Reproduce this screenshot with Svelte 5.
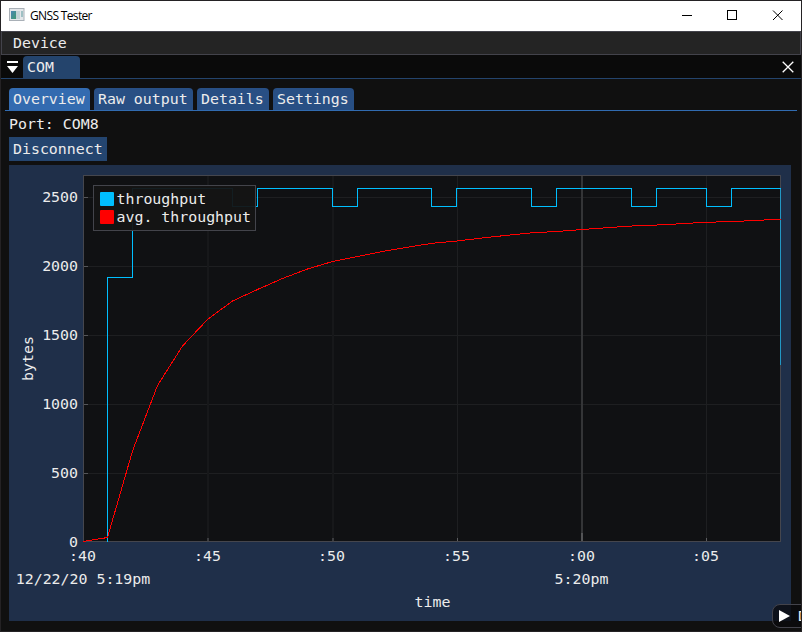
<script>
  const tabs = [
    { name: 'Overview', width: 81 },
    { name: 'Raw output', width: 99 },
    { name: 'Details', width: 72 },
    { name: 'Settings', width: 81 }
  ];
  let active = $state('Overview');

  const yTicks = [
    [2500, 197], [2000, 266], [1500, 335], [1000, 404], [500, 473], [0, 542]
  ];
  const xTicks = [
    [':40', 83], [':45', 208], [':50', 332], [':55', 457], [':00', 582], [':05', 706]
  ];

  const throughput =
    'M107.5 542V277.5H132.5V188.5H232.5V206.5H257.5V188.5H332.5V206.5H357.5V188.5H431.5V206.5H456.5V188.5H531.5V206.5H556.5V188.5H631.5V206.5H656.5V188.5H706.5V206.5H731.5V188.5H781';
  const average =
    '83.5,541.5 107.5,537.5 132.5,451 157.5,385.5 182.5,346 207.5,319.5 232.5,301 257.5,289.5 282.5,278.5 307.5,269 332.5,261.5 357.5,256.5 382.5,251.5 407.5,247.2 432,243.3 457,241 482,238 507,235.3 532,232.8 557,231.5 582,229.5 607,227.7 632,226 657,225 682,223.7 707,222.2 732,221.7 757,220.3 781,219.3';
</script>

<div class="window">
  <header class="titlebar">
    <svg class="appicon" width="16" height="14" viewBox="0 0 16 14">
      <defs>
        <linearGradient id="screen" x1="0" y1="0" x2="1" y2="1">
          <stop offset="0" stop-color="#4a86b4" />
          <stop offset="1" stop-color="#3f9a72" />
        </linearGradient>
      </defs>
      <rect x=".5" y=".5" width="14.5" height="12" fill="#e4e7ea" stroke="#a9b0b7" />
      <rect x="2" y="3" width="5" height="8" fill="url(#screen)" />
      <rect x="7" y="3" width="4" height="8" fill="#c3d3d6" />
      <rect x="12" y="3" width="2" height="6" fill="#9fc0c4" />
    </svg>
    <span class="title">GNSS Tester</span>
    <svg class="controls" width="120" height="30" viewBox="0 0 120 30" fill="none" stroke="#000">
      <path d="M5 14.5H15" />
      <rect x="50.5" y="9.5" width="9" height="9" />
      <path d="M96 9.5L105.5 19M105.5 9.5L96 19" />
    </svg>
  </header>

  <nav class="menubar"><span>Device</span></nav>

  <div class="dock">
    <svg class="drop" width="12" height="12" viewBox="0 0 12 12" fill="#fff">
      <rect x="0" y="0" width="11" height="2" />
      <path d="M0 5H11L5.5 12Z" />
    </svg>
    <span class="docktab">COM</span>
    <svg class="close" width="12" height="12" viewBox="0 0 12 12" stroke="#fff" stroke-width="1.3">
      <path d="M.7 .7L11.3 11.3M11.3 .7L.7 11.3" />
    </svg>
  </div>

  <main>
    <div class="tabs">
      {#each tabs as { name, width }}
        <button class="tab" class:active={active === name} style:width="{width}px" onclick={() => (active = name)}>{name}</button>
      {/each}
    </div>
    <div class="port">Port: COM8</div>
    <button class="disconnect">Disconnect</button>

    <svg class="chart" width="782" height="456" viewBox="9 165 782 456">
      <rect x="83" y="175" width="698" height="367" fill="#101113" />
      <g shape-rendering="crispEdges">
        {#each yTicks.slice(0, 5) as [, y]}
          <path d="M84 {y + 0.5}H780" stroke="#1e1f21" />
          <path d="M84 {y + 0.5}h4" stroke="#55565a" />
        {/each}
        {#each xTicks.slice(1) as [label, x]}
          {#if label === ':00'}
            <path d="M{x} 176V541" stroke="#343537" stroke-width="2" />
            <path d="M{x} 533V542" stroke="#535456" stroke-width="2" />
          {:else if label === ':45' || label === ':50'}
            <path d="M{x + (label === ':50' ? 1 : 0)} 176V541" stroke="#17181a" stroke-width="2" />
            <path d="M{x + (label === ':50' ? 1 : 0)} 538V542" stroke="#3b3c3f" stroke-width="2" />
          {:else}
            <path d="M{x + 0.5} 176V541" stroke="#1e1f21" />
            <path d="M{x + 0.5} 538V542" stroke="#5c5d60" />
          {/if}
        {/each}
        <rect x="83.5" y="175.5" width="697" height="366" fill="none" stroke="#45464d" />
        <path d={throughput} fill="none" stroke="#00bfff" />
        <path d="M780.5 189V365" stroke="#2297c4" />
        <polyline points={average} fill="none" stroke="#f00" />
        <rect x="93.5" y="185.5" width="162" height="45" fill="#141414" fill-opacity=".94" stroke="#43444b" />
      </g>
      <rect x="100" y="192" width="14" height="14" rx="1" fill="#00bfff" />
      <rect x="100" y="210" width="14" height="14" rx="1" fill="#f00" />
      <g class="labels">
        <text x="116.5" y="204">throughput</text>
        <text x="116.5" y="222">avg. throughput</text>
        {#each yTicks as [value, y]}
          <text x="78" y={y + 5} text-anchor="end">{value}</text>
        {/each}
        {#each xTicks as [label, x]}
          <text x={x - 0.5} y="561" text-anchor="middle">{label}</text>
        {/each}
        <text x="83" y="584" text-anchor="middle">12/22/20 5:19pm</text>
        <text x="581.5" y="584" text-anchor="middle">5:20pm</text>
        <text x="432.5" y="607" text-anchor="middle">time</text>
        <text transform="translate(33 358.5) rotate(-90)" text-anchor="middle">bytes</text>
      </g>
    </svg>
  </main>

  <div class="debug">
    <svg width="11" height="12" viewBox="0 0 11 12" fill="#fff"><path d="M0 0L11 6L0 12Z" /></svg>
    <span>D</span>
  </div>
</div>

<style>
  :global(body) {
    margin: 0;
    background: #101010;
  }
  .window {
    position: relative;
    box-sizing: border-box;
    width: 802px;
    height: 632px;
    overflow: hidden;
    display: flex;
    flex-direction: column;
    background: #101010;
    border: 1px solid #242224;
    color: #ececec;
    font: 14.9px/18px 'DejaVu Sans Mono', monospace;
    white-space: pre;
  }
  svg {
    display: block;
    flex: none;
  }
  .titlebar {
    display: flex;
    align-items: center;
    height: 30px;
    background: #fff;
    color: #000;
    font: 12px/16px 'Open Sans', 'Noto Sans', sans-serif;
    letter-spacing: -0.65px;
  }
  .appicon {
    margin-left: 8px;
    margin-bottom: 2px;
  }
  .title {
    margin-left: 5px;
  }
  .controls {
    margin-left: auto;
    margin-right: 4px;
  }
  .menubar {
    box-sizing: border-box;
    height: 24px;
    padding: 2px 11px;
    background: #242424;
    border: 1px solid #43434b;
  }
  .dock {
    box-sizing: border-box;
    display: flex;
    align-items: center;
    height: 24px;
    background: #0a0a0a;
    border-bottom: 1px solid #24446c;
    padding: 0 7px 0 6px;
  }
  .docktab {
    align-self: flex-end;
    box-sizing: border-box;
    width: 57px;
    height: 22px;
    margin-left: 4px;
    padding: 2px 4px;
    border-radius: 4px 4px 0 0;
    background: #24446c;
  }
  .close {
    margin-left: auto;
  }
  main {
    display: flex;
    flex-direction: column;
    align-items: flex-start;
    padding: 9px 4px 0;
  }
  button {
    border: 0;
    margin: 0;
    color: inherit;
    font: inherit;
  }
  .tabs {
    align-self: stretch;
    display: flex;
    gap: 4px;
    padding: 0 4px;
    border-bottom: 1px solid #316bb0;
  }
  .tab {
    height: 22px;
    padding: 0 4px;
    text-align: left;
    border-radius: 4px 4px 0 0;
    background: #284f84;
  }
  .tab.active {
    background: #336bb0;
  }
  .port {
    margin: 4px 0 0 4px;
    height: 18px;
  }
  .disconnect {
    margin: 4px 0 0 4px;
    width: 98px;
    height: 24px;
    padding: 0 4px;
    text-align: left;
    background: #24456f;
  }
  .chart {
    margin: 4px 0 0 4px;
    background: #1f2f49;
  }
  .labels {
    fill: #ececec;
  }
  .debug {
    position: absolute;
    left: 771px;
    top: 603px;
    box-sizing: border-box;
    width: 60px;
    height: 24px;
    display: flex;
    align-items: center;
    gap: 8px;
    padding-left: 6px;
    border: 1px solid #43434b;
    border-radius: 8px;
    background: rgba(10, 10, 12, 0.75);
  }
</style>
